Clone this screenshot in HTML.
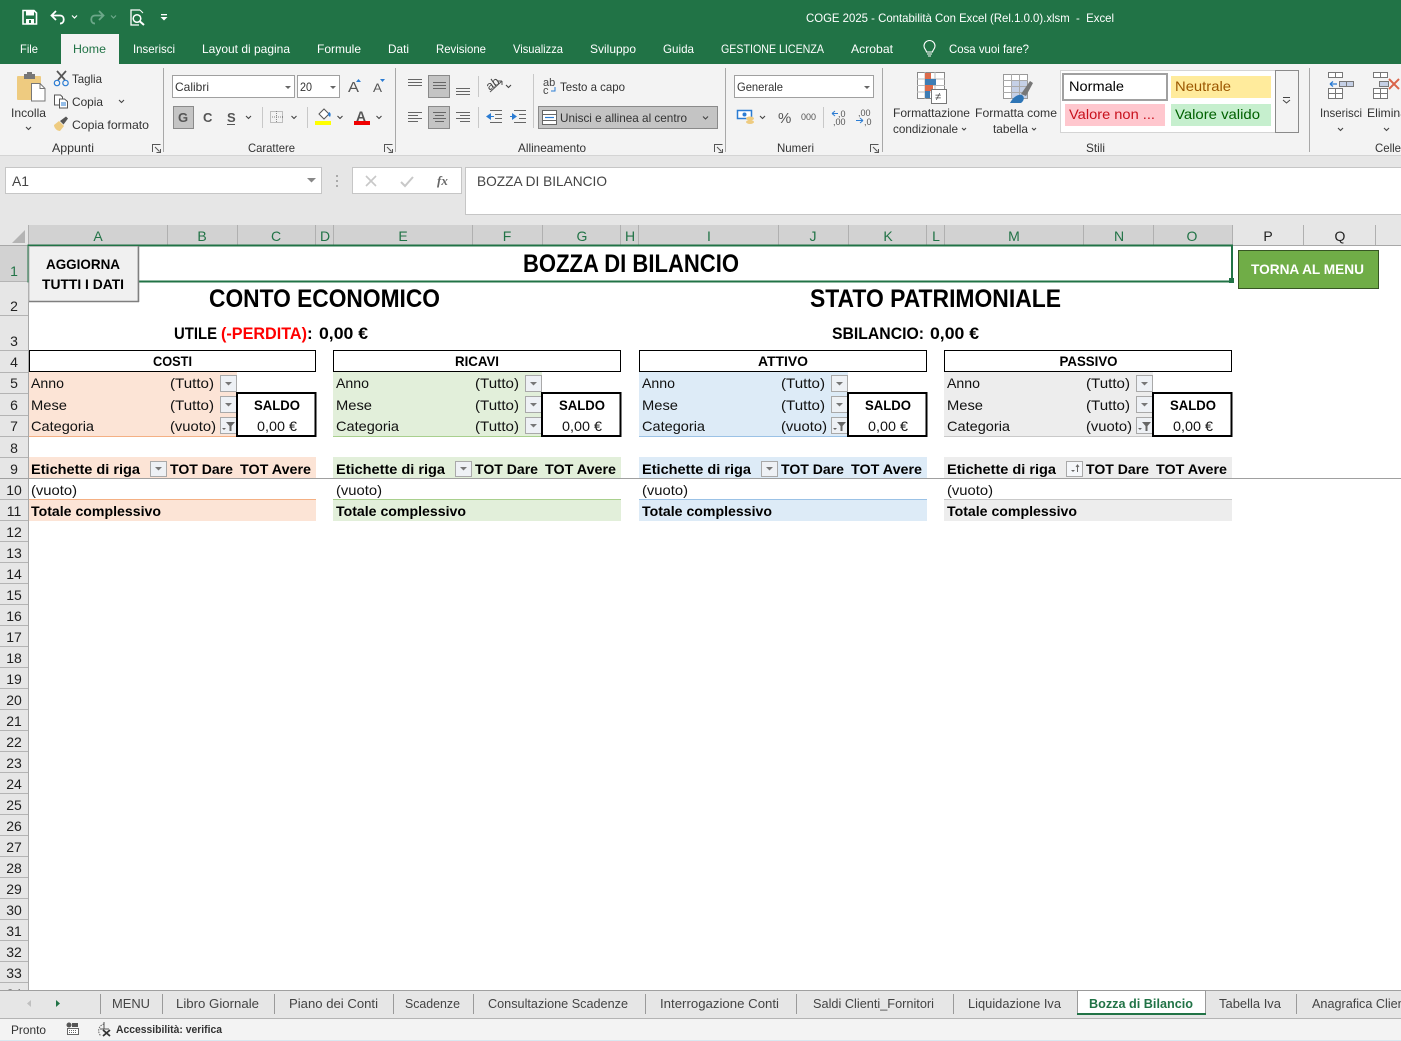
<!DOCTYPE html>
<html lang="it"><head><meta charset="utf-8"><title>COGE 2025 - Excel</title>
<style>
html,body{margin:0;padding:0;width:1401px;height:1041px;overflow:hidden;background:#fff}
svg{display:block;font-family:"Liberation Sans",Arial,sans-serif}
.t{font-size:12px;fill:#fff}
.m{font-size:12px;fill:#fff}
.r{font-size:12px;fill:#333}
.h{font-size:14px;fill:#222;text-anchor:middle}
.hs{font-size:14px;fill:#217346;text-anchor:middle}
.c{font-size:14px;fill:#111}
.b{font-size:14px;fill:#000;font-weight:bold}
.big{font-size:25px;fill:#000;font-weight:bold}
.u{font-size:17px;fill:#000;font-weight:bold}
.tab{font-size:13px;fill:#444}
.ln{stroke:#666;stroke-width:1;fill:none}
.ic{stroke:#555;stroke-width:1;fill:none}
.car{stroke:#444;stroke-width:1.1;fill:none}
</style></head><body>
<svg width="1401" height="1041" viewBox="0 0 1401 1041" xmlns="http://www.w3.org/2000/svg">
<!-- top bar -->
<rect width="1401" height="64" fill="#217346"/>
<path d="M23 10.500h11l2.500 2.500v11h-13.500z" fill="none" stroke="#fff" stroke-width="1.600"/>
<rect x="26" y="11" width="8" height="4.500" fill="#fff"/><rect x="26" y="19" width="8" height="5" fill="#fff"/><rect x="29" y="20" width="2" height="3" fill="#217346"/>
<path d="M56 11l-4.500 4.500 4.500 4.500M52 15.500h8c5 0 5 8 0 8" fill="none" stroke="#fff" stroke-width="1.800"/>
<path d="M72 15.500l2.500 2.500 2.500-2.500" fill="none" stroke="#fff" stroke-width="1.200"/>
<path d="M99 11l4.500 4.500-4.500 4.500M103 15.500h-8c-5 0-5 8 0 8" fill="none" stroke="#6da88a" stroke-width="1.800"/>
<path d="M111 15.500l2.500 2.500 2.500-2.500" fill="none" stroke="#6da88a" stroke-width="1.200"/>
<path d="M140 10h-9v15h8" fill="none" stroke="#fff" stroke-width="1.300"/><path d="M140 10l3 3" fill="none" stroke="#fff"/>
<circle cx="137" cy="18.500" r="3.800" fill="none" stroke="#fff" stroke-width="1.500"/><path d="M140 21.500l4 3.500" stroke="#fff" stroke-width="2"/>
<rect x="161" y="14" width="6" height="1.300" fill="#fff"/><path d="M160.500 17h7l-3.500 3.500z" fill="#fff"/>
<text class="t" x="806" y="22" textLength="308" lengthAdjust="spacingAndGlyphs" xml:space="preserve">COGE 2025 - Contabilità Con Excel (Rel.1.0.0).xlsm  -  Excel</text>
<rect x="61" y="34" width="58" height="30" fill="#f3f3f3"/>
<text class="m" x="20" y="53" textLength="18" lengthAdjust="spacingAndGlyphs">File</text>
<text class="m" x="73" y="53" textLength="33" lengthAdjust="spacingAndGlyphs" style="fill:#217346">Home</text>
<text class="m" x="133" y="53" textLength="42" lengthAdjust="spacingAndGlyphs">Inserisci</text>
<text class="m" x="202" y="53" textLength="88" lengthAdjust="spacingAndGlyphs">Layout di pagina</text>
<text class="m" x="317" y="53" textLength="44" lengthAdjust="spacingAndGlyphs">Formule</text>
<text class="m" x="388" y="53" textLength="21" lengthAdjust="spacingAndGlyphs">Dati</text>
<text class="m" x="436" y="53" textLength="50" lengthAdjust="spacingAndGlyphs">Revisione</text>
<text class="m" x="513" y="53" textLength="50" lengthAdjust="spacingAndGlyphs">Visualizza</text>
<text class="m" x="590" y="53" textLength="46" lengthAdjust="spacingAndGlyphs">Sviluppo</text>
<text class="m" x="663" y="53" textLength="31" lengthAdjust="spacingAndGlyphs">Guida</text>
<text class="m" x="721" y="53" textLength="103" lengthAdjust="spacingAndGlyphs">GESTIONE LICENZA</text>
<text class="m" x="851" y="53" textLength="42" lengthAdjust="spacingAndGlyphs">Acrobat</text>
<path d="M926.500 52c0-2-2.500-3-2.500-6a5.500 5.500 0 0 1 11 0c0 3-2.500 4-2.500 6zM927 54h5M928 56h3" fill="none" stroke="#fff" stroke-width="1.100"/>
<text class="m" x="949" y="53" textLength="80" lengthAdjust="spacingAndGlyphs">Cosa vuoi fare?</text>

<!-- ribbon -->
<rect y="64" width="1401" height="92" fill="#f3f3f3"/>
<rect y="155" width="1401" height="1" fill="#d4d4d4"/>
<rect y="156" width="1401" height="69" fill="#e6e6e6"/>
<g fill="#a8a8a8"><rect x="163" y="68" width="1" height="84"/><rect x="395" y="68" width="1" height="84"/><rect x="725" y="68" width="1" height="84"/><rect x="882" y="68" width="1" height="84"/><rect x="1309" y="68" width="1" height="84"/></g>
<!-- clipboard -->
<rect x="17" y="76" width="24" height="24" rx="1" fill="#eecb80"/>
<rect x="24" y="74" width="11" height="5" fill="#777"/><rect x="27" y="72" width="5" height="3" fill="#777"/>
<path d="M31.500 83.500h8.500l5 5v12.500h-13.500z" fill="#fff" stroke="#777"/><path d="M40 83.500v5h5" fill="none" stroke="#777"/>
<text class="r" x="11" y="117" textLength="35" lengthAdjust="spacingAndGlyphs">Incolla</text>
<path d="M26 127l2.500 2.500 2.500-2.500" class="car"/>
<!-- scissors -->
<path d="M57 71l8 9M66 71l-8 9" stroke="#555" stroke-width="1.700" fill="none"/><circle cx="57" cy="83" r="2.700" fill="none" stroke="#2b7cd3" stroke-width="1.200"/><circle cx="65.500" cy="83" r="2.700" fill="none" stroke="#2b7cd3" stroke-width="1.200"/>
<text class="r" x="72" y="83" textLength="30" lengthAdjust="spacingAndGlyphs">Taglia</text>
<path d="M54.500 95h6l2 2v8h-8z" fill="#fff" stroke="#555"/><path d="M59.500 99h5l3 2.500v6.500h-8z" fill="#fff" stroke="#555"/><path d="M61 103h5M61 105h5" stroke="#2b7cd3"/>
<text class="r" x="72" y="106" textLength="31" lengthAdjust="spacingAndGlyphs">Copia</text>
<path d="M119 100l2.500 2.500 2.500-2.500" class="car"/>
<path d="M54 125l5-4 5 5-4 5c-3 0-6-3-6-6z" fill="#eecb80"/><path d="M60 121l6-4.500 2 2-4.500 6z" fill="#555"/>
<text class="r" x="72" y="129" textLength="77" lengthAdjust="spacingAndGlyphs">Copia formato</text>
<text class="r" x="52" y="152" textLength="42" lengthAdjust="spacingAndGlyphs">Appunti</text>
<path class="ic" d="M152.500 152v-7.500h8M160.500 149v3.500h-4M155 147l4.500 4.500"/>
<path d="M384.500 152v-7.500h8M392.500 149v3.500h-4M387 147l4.500 4.500M714.500 152v-7.500h8M722.500 149v3.500h-4M717 147l4.500 4.500M870.500 152v-7.500h8M878.500 149v3.500h-4M873 147l4.500 4.500" class="ic"/>
<!-- font -->
<rect x="172.500" y="75.500" width="122" height="22" fill="#fff" stroke="#a0a0a0"/>
<text class="r" x="175" y="91" textLength="34" lengthAdjust="spacingAndGlyphs">Calibri</text>
<path d="M285 86h6l-3 3z" fill="#666"/>
<rect x="297.500" y="75.500" width="42" height="22" fill="#fff" stroke="#a0a0a0"/>
<text class="r" x="300" y="91" textLength="12" lengthAdjust="spacingAndGlyphs">20</text>
<path d="M330 86h6l-3 3z" fill="#666"/>
<text x="348" y="92" font-size="15" fill="#555" textLength="11" lengthAdjust="spacingAndGlyphs">A</text><path d="M356 82l2.500-3 2.500 3z" fill="#2b7cd3"/>
<text x="373" y="92" font-size="12" fill="#555" textLength="9" lengthAdjust="spacingAndGlyphs">A</text><path d="M380 79l2.500 3 2.500-3z" fill="#2b7cd3"/>
<rect x="173.500" y="106.500" width="20" height="22" fill="#c4c4c4" stroke="#8a8a8a"/>
<text x="178" y="122" font-size="13" font-weight="bold" fill="#555">G</text>
<text x="203" y="122" font-size="13" font-weight="bold" fill="#555">C</text>
<text x="227" y="122" font-size="13" font-weight="bold" fill="#555">S</text><rect x="227" y="124" width="8" height="1" fill="#555"/>
<path d="M246 116l2.500 2.500 2.500-2.500M291.500 116l2.500 2.500 2.500-2.500M337.500 116l2.500 2.500 2.500-2.500M376.500 116l2.500 2.500 2.500-2.500" class="car"/>
<rect x="262" y="107" width="1" height="21" fill="#c8c8c8"/><rect x="307" y="107" width="1" height="21" fill="#c8c8c8"/>
<rect x="270.500" y="111.500" width="12" height="11" fill="none" stroke="#888" stroke-dasharray="1 1"/><path d="M276.500 111v12M270 117h13" stroke="#888" stroke-dasharray="1 1"/>
<path d="M319 114l5-5 5 5-5 5z" fill="#fff" stroke="#555"/><path d="M329 112c2 1 2 3 1 5l-2-2z" fill="#2b7cd3"/><rect x="315" y="121" width="16" height="4" fill="#ffff00"/>
<text x="356" y="121" font-size="14" font-weight="bold" fill="#555" textLength="10" lengthAdjust="spacingAndGlyphs">A</text><rect x="354" y="121" width="16" height="4" fill="#f00000"/>
<text class="r" x="248" y="152" textLength="47" lengthAdjust="spacingAndGlyphs">Carattere</text>
<!-- alignment -->
<rect x="428.500" y="75.500" width="21" height="22" fill="#c4c4c4" stroke="#8a8a8a"/>
<rect x="428.500" y="106.500" width="21" height="22" fill="#c4c4c4" stroke="#8a8a8a"/>
<path class="ln" d="M408 79.500h14M408 82.500h14M408 85.500h14M433 82.500h13M433 85.500h13M433 88.500h13M456 88.500h14M456 91.500h14M456 94.500h14M408 112.500h14M408 115.500h10M408 118.500h14M408 121.500h10M433 112.500h13M435 115.500h9M433 118.500h13M435 121.500h9M456 112.500h14M460 115.500h10M456 118.500h14M460 121.500h10"/>
<rect x="478" y="76" width="1" height="21" fill="#c8c8c8"/><rect x="478" y="107" width="1" height="21" fill="#c8c8c8"/><rect x="533" y="74" width="1" height="54" fill="#c8c8c8"/>
<text x="486" y="88" font-size="12" fill="#444" transform="rotate(-35 492 84)">ab</text><path d="M490 92l12-11M502 81h-4M502 81v4" class="ic"/>
<path d="M506 85l2.500 2.500 2.500-2.500" class="car"/>
<path d="M486 116.500l5-3.500v7z" fill="#2b7cd3"/><path d="M490 116.500h4" stroke="#2b7cd3"/><path class="ln" d="M490 110.500h12M495 114.500h7M495 118.500h7M490 122.500h12"/>
<path d="M517 116.500l-5-3.500v7z" fill="#2b7cd3"/><path d="M510 116.500h4" stroke="#2b7cd3"/><path class="ln" d="M514 110.500h12M519 114.500h7M519 118.500h7M514 122.500h12"/>
<text x="543" y="86" font-size="11" fill="#444">ab</text><text x="543" y="94" font-size="11" fill="#444">c</text><path d="M555 87v4h-4" fill="none" stroke="#2b7cd3"/>
<text class="r" x="560" y="91" textLength="65" lengthAdjust="spacingAndGlyphs">Testo a capo</text>
<rect x="538.500" y="106.500" width="179" height="22" fill="#c4c4c4" stroke="#8a8a8a"/>
<rect x="542.500" y="110.500" width="14" height="14" fill="#fff" stroke="#666"/><path d="M542 114.500h15M542 120.500h15" stroke="#666"/><path d="M545 117.500h9" stroke="#2b7cd3" stroke-width="1.200"/>
<text class="r" x="560" y="122" textLength="127" lengthAdjust="spacingAndGlyphs">Unisci e allinea al centro</text>
<path d="M703 116.500l2.500 2.500 2.500-2.500" class="car"/>
<text class="r" x="518" y="152" textLength="68" lengthAdjust="spacingAndGlyphs">Allineamento</text>
<!-- numbers -->
<rect x="734.500" y="75.500" width="139" height="22" fill="#fff" stroke="#a0a0a0"/>
<text class="r" x="737" y="91" textLength="46" lengthAdjust="spacingAndGlyphs">Generale</text>
<path d="M864 86h6l-3 3z" fill="#666"/>
<rect x="737.500" y="110.500" width="14" height="8" fill="#fff" stroke="#2b7cd3" stroke-width="1.500"/><circle cx="744.500" cy="114.500" r="2" fill="#2b7cd3"/><ellipse cx="750" cy="122" rx="4" ry="2" fill="#eecb80"/><ellipse cx="750" cy="118.500" rx="4" ry="2" fill="#eecb80"/>
<path d="M760 116l2.500 2.500 2.500-2.500" class="car"/>
<text x="778" y="123" font-size="15" fill="#555">%</text>
<text x="801" y="120" font-size="9" fill="#555" textLength="15" lengthAdjust="spacingAndGlyphs">000</text>
<rect x="823" y="107" width="1" height="21" fill="#c8c8c8"/>
<text x="838" y="117" font-size="9" fill="#555">,0</text><text x="833" y="125" font-size="9" fill="#555">,00</text><path d="M832 113.500h6M832 113.500l3-2.500M832 113.500l3 2.500" fill="none" stroke="#2b7cd3"/>
<text x="858" y="116" font-size="9" fill="#555">,00</text><text x="864" y="125" font-size="9" fill="#555">,0</text><path d="M856 120.500h7M863 120.500l-3-2.500M863 120.500l-3 2.500" fill="none" stroke="#2b7cd3"/>
<text class="r" x="777" y="152" textLength="37" lengthAdjust="spacingAndGlyphs">Numeri</text>
<!-- cond format -->
<rect x="917.500" y="72.500" width="27" height="26" fill="#fff" stroke="#888"/>
<path d="M917 79h28M917 85.500h28M917 92h28M925 72v27M935 72v27" stroke="#bbb"/>
<rect x="925" y="73" width="6" height="6" fill="#dd6b4a"/><rect x="925" y="79" width="11" height="6" fill="#3d7db5"/><rect x="925" y="85" width="8" height="6" fill="#dd6b4a"/><rect x="925" y="91" width="5" height="7" fill="#3d7db5"/>
<rect x="931.500" y="89.500" width="15" height="14" fill="#fff" stroke="#777"/><text x="935" y="100" font-size="11" fill="#444">≠</text>
<text class="r" x="893" y="117" textLength="77" lengthAdjust="spacingAndGlyphs">Formattazione</text>
<text class="r" x="893" y="133" textLength="65" lengthAdjust="spacingAndGlyphs">condizionale</text>
<path d="M962 128l2 2 2-2M1032 128l2 2 2-2" class="car"/>
<!-- table format -->
<rect x="1003.500" y="74.500" width="24" height="24" fill="#fff" stroke="#999"/>
<rect x="1011" y="80" width="16" height="18" fill="#c5d0e6"/>
<path d="M1003 80.500h25M1003 86.500h25M1003 92.500h25M1011.500 74v25M1019.500 74v25" stroke="#aaa"/>
<path d="M1021 94l9-13 3 2-7 13z" fill="#777"/><path d="M1010 103c3-6 8-9 12-8 3 2 2 6-1 8z" fill="#2e75b6"/>
<text class="r" x="975" y="117" textLength="82" lengthAdjust="spacingAndGlyphs">Formatta come</text>
<text class="r" x="993" y="133" textLength="35" lengthAdjust="spacingAndGlyphs">tabella</text>
<!-- styles -->
<rect x="1060.500" y="70.500" width="215" height="62" fill="#fff" stroke="#d4d4d4"/>
<rect x="1275.500" y="70.500" width="23" height="62" fill="#f3f3f3" stroke="#8a8a8a"/>
<path d="M1283 97.500h7M1283 100l3.500 3 3.500-3" stroke="#444" fill="none"/>
<rect x="1063" y="74" width="104" height="26" fill="#fff" stroke="#a0a0a0" stroke-width="2"/>
<text x="1069" y="91" font-size="14" fill="#000" textLength="55" lengthAdjust="spacingAndGlyphs">Normale</text>
<rect x="1171" y="76" width="100" height="22" fill="#ffeb9c"/>
<text x="1175" y="91" font-size="14" fill="#9c5700" textLength="56" lengthAdjust="spacingAndGlyphs">Neutrale</text>
<rect x="1065" y="104" width="100" height="22" fill="#ffc7ce"/>
<text x="1069" y="119" font-size="14" fill="#c8101c" textLength="86" lengthAdjust="spacingAndGlyphs">Valore non ...</text>
<rect x="1171" y="104" width="100" height="22" fill="#c6efce"/>
<text x="1175" y="119" font-size="14" fill="#006100" textLength="85" lengthAdjust="spacingAndGlyphs">Valore valido</text>
<text class="r" x="1086" y="152" textLength="19" lengthAdjust="spacingAndGlyphs">Stili</text>
<!-- cells -->
<g fill="#fff" stroke="#777"><rect x="1328.500" y="72.500" width="7" height="5"/><rect x="1335.500" y="72.500" width="7" height="5"/><rect x="1339.500" y="81.500" width="7" height="5" fill="#c5d0e6"/><rect x="1346.500" y="81.500" width="7" height="5" fill="#c5d0e6"/><rect x="1328.500" y="88.500" width="7" height="5"/><rect x="1335.500" y="88.500" width="7" height="5"/><rect x="1328.500" y="93.500" width="7" height="5"/><rect x="1335.500" y="93.500" width="7" height="5"/></g>
<path d="M1330 84h7M1330 84l3-2.500M1330 84l3 2.500" stroke="#2b7cd3" fill="none" stroke-width="1.300"/>
<g fill="#fff" stroke="#777"><rect x="1373.500" y="72.500" width="7" height="5"/><rect x="1380.500" y="72.500" width="7" height="5"/><rect x="1379.500" y="81.500" width="9" height="5" fill="#c5d0e6"/><rect x="1373.500" y="88.500" width="7" height="5"/><rect x="1380.500" y="88.500" width="7" height="5"/><rect x="1373.500" y="93.500" width="7" height="5"/><rect x="1380.500" y="93.500" width="7" height="5"/></g>
<path d="M1389 79l10 10M1399 79l-10 10" stroke="#d9644a" stroke-width="2"/>
<text class="r" x="1320" y="117" textLength="42" lengthAdjust="spacingAndGlyphs">Inserisci</text>
<text class="r" x="1367" y="117" textLength="40" lengthAdjust="spacingAndGlyphs">Elimina</text>
<path d="M1338 128l2.500 2.500 2.500-2.500M1384 128l2.500 2.500 2.500-2.500" class="car"/>
<text class="r" x="1375" y="152" textLength="26" lengthAdjust="spacingAndGlyphs">Celle</text>

<!-- formula bar -->
<rect x="5.500" y="167.500" width="316" height="26" fill="#fff" stroke="#c6c6c6"/>
<text x="12" y="186" font-size="14" fill="#444" textLength="17" lengthAdjust="spacingAndGlyphs">A1</text>
<path d="M307 178h9l-4.500 4.500z" fill="#888"/>
<g fill="#aaa"><rect x="336" y="175" width="2" height="2"/><rect x="336" y="180" width="2" height="2"/><rect x="336" y="185" width="2" height="2"/></g>
<rect x="352.500" y="167.500" width="109" height="26" fill="#fff" stroke="#c6c6c6"/>
<path d="M366 176l10 10M376 176l-10 10" stroke="#c8c8c8" stroke-width="1.600"/>
<path d="M401 182l4 4 8-9" stroke="#c8c8c8" stroke-width="2" fill="none"/>
<text x="437" y="185" font-size="13" font-style="italic" font-family="Liberation Serif" fill="#666" font-weight="bold">fx</text>
<rect x="465.500" y="167.500" width="940" height="47" fill="#fff" stroke="#c6c6c6"/>
<text x="477" y="186" font-size="14" fill="#444" textLength="130" lengthAdjust="spacingAndGlyphs">BOZZA DI BILANCIO</text>

<!-- column headers -->
<rect x="0" y="225" width="1401" height="20" fill="#e6e6e6"/>
<rect x="29" y="225" width="1203" height="20" fill="#d2d2d2"/>
<path d="M12 243L25 230v13z" fill="#b4b4b4"/>
<path stroke="#b0b0b0" d="M28.500 225v20M167.500 225v20M237.500 225v20M315.500 225v20M333.500 225v20M472.500 225v20M542.500 225v20M620.500 225v20M638.500 225v20M778.500 225v20M848.500 225v20M926.500 225v20M944.500 225v20M1083.500 225v20M1153.500 225v20M1232.500 225v20M1303.500 225v20M1375.500 225v20"/>
<rect x="0" y="245" width="1401" height="1" fill="#a8a8a8"/>
<text class="hs" x="98" y="241">A</text><text class="hs" x="202" y="241">B</text><text class="hs" x="276" y="241">C</text><text class="hs" x="325" y="241">D</text><text class="hs" x="403" y="241">E</text><text class="hs" x="507" y="241">F</text><text class="hs" x="582" y="241">G</text><text class="hs" x="630" y="241">H</text><text class="hs" x="709" y="241">I</text><text class="hs" x="813" y="241">J</text><text class="hs" x="888" y="241">K</text><text class="hs" x="936" y="241">L</text><text class="hs" x="1014" y="241">M</text><text class="hs" x="1119" y="241">N</text><text class="hs" x="1192" y="241">O</text><text class="h" x="1268" y="241">P</text><text class="h" x="1340" y="241">Q</text>

<!-- row headers -->
<rect x="0" y="246" width="28" height="744" fill="#e6e6e6"/>
<rect x="0" y="246" width="28" height="35" fill="#d2d2d2"/>
<rect x="28" y="246" width="1" height="744" fill="#a8a8a8"/>
<path stroke="#b4b4b4" d="M0 281.500h28M0 315.500h28M0 350.500h28M0 372.500h28M0 393.500h28M0 415.500h28M0 436.500h28M0 457.500h28M0 478.500h28M0 499.500h28M0 520.500h28M0 541.500h28M0 562.500h28M0 583.500h28M0 604.500h28M0 625.500h28M0 646.500h28M0 667.500h28M0 688.500h28M0 709.500h28M0 730.500h28M0 751.500h28M0 772.500h28M0 793.500h28M0 814.500h28M0 835.500h28M0 856.500h28M0 877.500h28M0 898.500h28M0 919.500h28M0 940.500h28M0 961.500h28M0 982.500h28"/>
<text class="hs" x="14" y="276">1</text><text class="h" x="14" y="311">2</text><text class="h" x="14" y="346">3</text><text class="h" x="14" y="367">4</text><text class="h" x="14" y="388">5</text><text class="h" x="14" y="410">6</text><text class="h" x="14" y="431">7</text><text class="h" x="14" y="453">8</text><text class="h" x="14" y="474">9</text><text class="h" x="14" y="495">10</text><text class="h" x="14" y="516">11</text><text class="h" x="14" y="537">12</text><text class="h" x="14" y="558">13</text><text class="h" x="14" y="579">14</text><text class="h" x="14" y="600">15</text><text class="h" x="14" y="621">16</text><text class="h" x="14" y="642">17</text><text class="h" x="14" y="663">18</text><text class="h" x="14" y="684">19</text><text class="h" x="14" y="705">20</text><text class="h" x="14" y="726">21</text><text class="h" x="14" y="747">22</text><text class="h" x="14" y="768">23</text><text class="h" x="14" y="789">24</text><text class="h" x="14" y="810">25</text><text class="h" x="14" y="831">26</text><text class="h" x="14" y="852">27</text><text class="h" x="14" y="873">28</text><text class="h" x="14" y="894">29</text><text class="h" x="14" y="915">30</text><text class="h" x="14" y="936">31</text><text class="h" x="14" y="957">32</text><text class="h" x="14" y="978">33</text><text class="h" x="14" y="999">34</text>

<!-- sheet headings -->
<text class="big" x="523" y="272" textLength="216" lengthAdjust="spacingAndGlyphs">BOZZA DI BILANCIO</text>
<text class="big" x="209" y="307" textLength="231" lengthAdjust="spacingAndGlyphs">CONTO ECONOMICO</text>
<text class="big" x="810" y="307" textLength="251" lengthAdjust="spacingAndGlyphs">STATO PATRIMONIALE</text>
<text class="u" x="174" y="339" textLength="43" lengthAdjust="spacingAndGlyphs">UTILE</text>
<text class="u" x="221" y="339" textLength="86" lengthAdjust="spacingAndGlyphs" style="fill:#f00">(-PERDITA)</text>
<text class="u" x="307" y="339">:</text>
<text class="u" x="319" y="339" textLength="49" lengthAdjust="spacingAndGlyphs">0,00 €</text>
<text class="u" x="832" y="339" textLength="92" lengthAdjust="spacingAndGlyphs">SBILANCIO:</text>
<text class="u" x="930" y="339" textLength="49" lengthAdjust="spacingAndGlyphs">0,00 €</text>

<!-- COSTI -->
<g>
<rect x="29.500" y="350.500" width="286" height="21" fill="#fff" stroke="#000"/>
<text class="b" x="153" y="366" textLength="39" lengthAdjust="spacingAndGlyphs">COSTI</text>
<rect x="29" y="372" width="208" height="65" fill="#fce4d6"/><rect x="29" y="436" width="208" height="1" fill="#f4b084"/>
<rect x="29" y="457" width="287" height="21" fill="#fce4d6"/>
<rect x="29" y="499" width="287" height="22" fill="#fce4d6"/><rect x="29" y="499" width="287" height="1" fill="#f4b084"/>
<text class="c" x="31" y="388" textLength="33" lengthAdjust="spacingAndGlyphs">Anno</text><text class="c" x="170" y="388" textLength="44" lengthAdjust="spacingAndGlyphs">(Tutto)</text>
<text class="c" x="31" y="410" textLength="36" lengthAdjust="spacingAndGlyphs">Mese</text><text class="c" x="170" y="410" textLength="44" lengthAdjust="spacingAndGlyphs">(Tutto)</text>
<text class="c" x="31" y="431" textLength="63" lengthAdjust="spacingAndGlyphs">Categoria</text><text class="c" x="170" y="431" textLength="46" lengthAdjust="spacingAndGlyphs">(vuoto)</text>
<rect x="220.500" y="375.500" width="16" height="16" fill="#eef1f5" stroke="#a9a9a9"/><path d="M225 382h7l-3.500 3.500z" fill="#777"/>
<rect x="220.500" y="396.500" width="16" height="16" fill="#eef1f5" stroke="#a9a9a9"/><path d="M225 403h7l-3.500 3.500z" fill="#777"/>
<rect x="220.500" y="417.500" width="16" height="16" fill="#eef1f5" stroke="#a9a9a9"/>
<rect x="237" y="393" width="78.500" height="43" fill="#fff" stroke="#000" stroke-width="2"/>
<path d="M226 422h9l-3.500 4v5h-2v-5z" fill="#666"/><path d="M222 428h4l-2 2z" fill="#666"/>
<text class="b" x="254" y="410" textLength="46" lengthAdjust="spacingAndGlyphs">SALDO</text><text class="c" x="257" y="431" textLength="40" lengthAdjust="spacingAndGlyphs">0,00 €</text>
<text class="b" x="31" y="474" textLength="109" lengthAdjust="spacingAndGlyphs">Etichette di riga</text>
<rect x="150.500" y="461.500" width="16" height="15" fill="#eef1f5" stroke="#a9a9a9"/><path d="M155 467h7l-3.500 3.500z" fill="#777"/>
<text class="b" x="170" y="474" textLength="63" lengthAdjust="spacingAndGlyphs">TOT Dare</text><text class="b" x="240" y="474" textLength="71" lengthAdjust="spacingAndGlyphs">TOT Avere</text>
<text class="c" x="31" y="495" textLength="46" lengthAdjust="spacingAndGlyphs">(vuoto)</text>
<text class="b" x="31" y="516" textLength="130" lengthAdjust="spacingAndGlyphs">Totale complessivo</text>
</g>
<!-- RICAVI -->
<g transform="translate(305 0)">
<rect x="28.500" y="350.500" width="287" height="21" fill="#fff" stroke="#000"/>
<text class="b" x="150" y="366" textLength="44" lengthAdjust="spacingAndGlyphs">RICAVI</text>
<rect x="28" y="372" width="209" height="65" fill="#e2efda"/><rect x="28" y="436" width="209" height="1" fill="#a9d08e"/>
<rect x="28" y="457" width="288" height="21" fill="#e2efda"/>
<rect x="28" y="499" width="288" height="22" fill="#e2efda"/><rect x="28" y="499" width="288" height="1" fill="#a9d08e"/>
<text class="c" x="31" y="388" textLength="33" lengthAdjust="spacingAndGlyphs">Anno</text><text class="c" x="170" y="388" textLength="44" lengthAdjust="spacingAndGlyphs">(Tutto)</text>
<text class="c" x="31" y="410" textLength="36" lengthAdjust="spacingAndGlyphs">Mese</text><text class="c" x="170" y="410" textLength="44" lengthAdjust="spacingAndGlyphs">(Tutto)</text>
<text class="c" x="31" y="431" textLength="63" lengthAdjust="spacingAndGlyphs">Categoria</text><text class="c" x="170" y="431" textLength="44" lengthAdjust="spacingAndGlyphs">(Tutto)</text>
<rect x="220.500" y="375.500" width="16" height="16" fill="#eef1f5" stroke="#a9a9a9"/><path d="M225 382h7l-3.500 3.500z" fill="#777"/>
<rect x="220.500" y="396.500" width="16" height="16" fill="#eef1f5" stroke="#a9a9a9"/><path d="M225 403h7l-3.500 3.500z" fill="#777"/>
<rect x="220.500" y="417.500" width="16" height="16" fill="#eef1f5" stroke="#a9a9a9"/><path d="M225 424h7l-3.500 3.500z" fill="#777"/>
<rect x="237" y="393" width="78.500" height="43" fill="#fff" stroke="#000" stroke-width="2"/>
<text class="b" x="254" y="410" textLength="46" lengthAdjust="spacingAndGlyphs">SALDO</text><text class="c" x="257" y="431" textLength="40" lengthAdjust="spacingAndGlyphs">0,00 €</text>
<text class="b" x="31" y="474" textLength="109" lengthAdjust="spacingAndGlyphs">Etichette di riga</text>
<rect x="150.500" y="461.500" width="16" height="15" fill="#eef1f5" stroke="#a9a9a9"/><path d="M155 467h7l-3.500 3.500z" fill="#777"/>
<text class="b" x="170" y="474" textLength="63" lengthAdjust="spacingAndGlyphs">TOT Dare</text><text class="b" x="240" y="474" textLength="71" lengthAdjust="spacingAndGlyphs">TOT Avere</text>
<text class="c" x="31" y="495" textLength="46" lengthAdjust="spacingAndGlyphs">(vuoto)</text>
<text class="b" x="31" y="516" textLength="130" lengthAdjust="spacingAndGlyphs">Totale complessivo</text>
</g>
<!-- ATTIVO -->
<g transform="translate(611 0)">
<rect x="28.500" y="350.500" width="287" height="21" fill="#fff" stroke="#000"/>
<text class="b" x="147" y="366" textLength="50" lengthAdjust="spacingAndGlyphs">ATTIVO</text>
<rect x="28" y="372" width="209" height="65" fill="#ddebf7"/><rect x="28" y="436" width="209" height="1" fill="#9bc2e6"/>
<rect x="28" y="457" width="288" height="21" fill="#ddebf7"/>
<rect x="28" y="499" width="288" height="22" fill="#ddebf7"/><rect x="28" y="499" width="288" height="1" fill="#9bc2e6"/>
<text class="c" x="31" y="388" textLength="33" lengthAdjust="spacingAndGlyphs">Anno</text><text class="c" x="170" y="388" textLength="44" lengthAdjust="spacingAndGlyphs">(Tutto)</text>
<text class="c" x="31" y="410" textLength="36" lengthAdjust="spacingAndGlyphs">Mese</text><text class="c" x="170" y="410" textLength="44" lengthAdjust="spacingAndGlyphs">(Tutto)</text>
<text class="c" x="31" y="431" textLength="63" lengthAdjust="spacingAndGlyphs">Categoria</text><text class="c" x="170" y="431" textLength="46" lengthAdjust="spacingAndGlyphs">(vuoto)</text>
<rect x="220.500" y="375.500" width="16" height="16" fill="#eef1f5" stroke="#a9a9a9"/><path d="M225 382h7l-3.500 3.500z" fill="#777"/>
<rect x="220.500" y="396.500" width="16" height="16" fill="#eef1f5" stroke="#a9a9a9"/><path d="M225 403h7l-3.500 3.500z" fill="#777"/>
<rect x="220.500" y="417.500" width="16" height="16" fill="#eef1f5" stroke="#a9a9a9"/>
<rect x="237" y="393" width="78.500" height="43" fill="#fff" stroke="#000" stroke-width="2"/>
<path d="M226 422h9l-3.500 4v5h-2v-5z" fill="#666"/><path d="M222 428h4l-2 2z" fill="#666"/>
<text class="b" x="254" y="410" textLength="46" lengthAdjust="spacingAndGlyphs">SALDO</text><text class="c" x="257" y="431" textLength="40" lengthAdjust="spacingAndGlyphs">0,00 €</text>
<text class="b" x="31" y="474" textLength="109" lengthAdjust="spacingAndGlyphs">Etichette di riga</text>
<rect x="150.500" y="461.500" width="16" height="15" fill="#eef1f5" stroke="#a9a9a9"/><path d="M155 467h7l-3.500 3.500z" fill="#777"/>
<text class="b" x="170" y="474" textLength="63" lengthAdjust="spacingAndGlyphs">TOT Dare</text><text class="b" x="240" y="474" textLength="71" lengthAdjust="spacingAndGlyphs">TOT Avere</text>
<text class="c" x="31" y="495" textLength="46" lengthAdjust="spacingAndGlyphs">(vuoto)</text>
<text class="b" x="31" y="516" textLength="130" lengthAdjust="spacingAndGlyphs">Totale complessivo</text>
</g>
<!-- PASSIVO -->
<g transform="translate(916 0)">
<rect x="28.500" y="350.500" width="287" height="21" fill="#fff" stroke="#000"/>
<text class="b" x="143.500" y="366" textLength="58" lengthAdjust="spacingAndGlyphs">PASSIVO</text>
<rect x="28" y="372" width="209" height="65" fill="#ededed"/><rect x="28" y="436" width="209" height="1" fill="#c9c9c9"/>
<rect x="28" y="457" width="288" height="21" fill="#ededed"/>
<rect x="28" y="499" width="288" height="22" fill="#ededed"/><rect x="28" y="499" width="288" height="1" fill="#c9c9c9"/>
<text class="c" x="31" y="388" textLength="33" lengthAdjust="spacingAndGlyphs">Anno</text><text class="c" x="170" y="388" textLength="44" lengthAdjust="spacingAndGlyphs">(Tutto)</text>
<text class="c" x="31" y="410" textLength="36" lengthAdjust="spacingAndGlyphs">Mese</text><text class="c" x="170" y="410" textLength="44" lengthAdjust="spacingAndGlyphs">(Tutto)</text>
<text class="c" x="31" y="431" textLength="63" lengthAdjust="spacingAndGlyphs">Categoria</text><text class="c" x="170" y="431" textLength="46" lengthAdjust="spacingAndGlyphs">(vuoto)</text>
<rect x="220.500" y="375.500" width="16" height="16" fill="#eef1f5" stroke="#a9a9a9"/><path d="M225 382h7l-3.500 3.500z" fill="#777"/>
<rect x="220.500" y="396.500" width="16" height="16" fill="#eef1f5" stroke="#a9a9a9"/><path d="M225 403h7l-3.500 3.500z" fill="#777"/>
<rect x="220.500" y="417.500" width="16" height="16" fill="#eef1f5" stroke="#a9a9a9"/>
<rect x="237" y="393" width="78.500" height="43" fill="#fff" stroke="#000" stroke-width="2"/>
<path d="M226 422h9l-3.500 4v5h-2v-5z" fill="#666"/><path d="M222 428h4l-2 2z" fill="#666"/>
<text class="b" x="254" y="410" textLength="46" lengthAdjust="spacingAndGlyphs">SALDO</text><text class="c" x="257" y="431" textLength="40" lengthAdjust="spacingAndGlyphs">0,00 €</text>
<text class="b" x="31" y="474" textLength="109" lengthAdjust="spacingAndGlyphs">Etichette di riga</text>
<rect x="150.500" y="461.500" width="16" height="15" fill="#f5f7fa" stroke="#a9a9a9"/><path d="M155 470h4l-2 2z" fill="#666"/><path d="M161.500 472v-7M160 467l1.500-2 1.500 2" stroke="#666" fill="none"/>
<text class="b" x="170" y="474" textLength="63" lengthAdjust="spacingAndGlyphs">TOT Dare</text><text class="b" x="240" y="474" textLength="71" lengthAdjust="spacingAndGlyphs">TOT Avere</text>
<text class="c" x="31" y="495" textLength="46" lengthAdjust="spacingAndGlyphs">(vuoto)</text>
<text class="b" x="31" y="516" textLength="130" lengthAdjust="spacingAndGlyphs">Totale complessivo</text>
</g>
<!-- freeze line -->
<rect x="0" y="478" width="1401" height="1" fill="#a0a0a0"/>
<!-- selection -->
<rect x="28.500" y="245.500" width="1203.500" height="36" fill="none" stroke="#217346" stroke-width="2"/>
<rect x="1229" y="278" width="5" height="5" fill="#217346"/>
<!-- buttons -->
<rect x="29" y="246.500" width="109" height="55" fill="#f0f0f0" stroke="#b8b8b8"/>
<path d="M138.500 246v56M29 301.500h110" stroke="#7f7f7f" stroke-width="1.500"/>
<text class="b" x="46" y="269" textLength="74" lengthAdjust="spacingAndGlyphs">AGGIORNA</text>
<text class="b" x="42" y="289" textLength="82" lengthAdjust="spacingAndGlyphs">TUTTI I DATI</text>
<rect x="1238.500" y="250.500" width="140" height="38" fill="#70ad47" stroke="#375623"/>
<text class="b" x="1251" y="274" textLength="113" lengthAdjust="spacingAndGlyphs" style="fill:#fff">TORNA AL MENU</text>

<!-- tab bar -->
<rect x="0" y="990" width="1401" height="29" fill="#e6e6e6"/>
<rect x="0" y="990" width="1401" height="1" fill="#a0a0a0"/>
<rect x="0" y="1018" width="1401" height="1" fill="#b4b4b4"/>
<path d="M31 1000v7l-4-3.500z" fill="#c0c0c0"/><path d="M56 1000v7l4-3.500z" fill="#217346"/>
<path stroke="#9a9a9a" d="M100.500 994v20M162.500 994v20M274.500 994v20M393.500 994v20M473.500 994v20M645.500 994v20M796.500 994v20M953.500 994v20M1296.500 994v20"/>
<path d="M1077.500 1013V990.500H1205.500V1013" fill="#fff" stroke="#9a9a9a"/><rect x="1078" y="991" width="127" height="24" fill="#fff"/>
<rect x="1077" y="1013" width="129" height="2" fill="#217346"/>
<text class="tab" x="112" y="1008" textLength="38" lengthAdjust="spacingAndGlyphs">MENU</text>
<text class="tab" x="176" y="1008" textLength="83" lengthAdjust="spacingAndGlyphs">Libro Giornale</text>
<text class="tab" x="289" y="1008" textLength="89" lengthAdjust="spacingAndGlyphs">Piano dei Conti</text>
<text class="tab" x="405" y="1008" textLength="55" lengthAdjust="spacingAndGlyphs">Scadenze</text>
<text class="tab" x="488" y="1008" textLength="140" lengthAdjust="spacingAndGlyphs">Consultazione Scadenze</text>
<text class="tab" x="660" y="1008" textLength="119" lengthAdjust="spacingAndGlyphs">Interrogazione Conti</text>
<text class="tab" x="813" y="1008" textLength="121" lengthAdjust="spacingAndGlyphs">Saldi Clienti_Fornitori</text>
<text class="tab" x="968" y="1008" textLength="93" lengthAdjust="spacingAndGlyphs">Liquidazione Iva</text>
<text class="tab" x="1089" y="1008" textLength="104" lengthAdjust="spacingAndGlyphs" style="fill:#217346;font-weight:bold">Bozza di Bilancio</text>
<text class="tab" x="1219" y="1008" textLength="62" lengthAdjust="spacingAndGlyphs">Tabella Iva</text>
<text class="tab" x="1312" y="1008" textLength="99" lengthAdjust="spacingAndGlyphs">Anagrafica Clienti</text>

<!-- status -->
<rect x="0" y="1019" width="1401" height="22" fill="#f3f3f3"/>
<rect x="0" y="1040" width="1401" height="1" fill="#d8e8f0"/>
<text class="r" x="11" y="1034" textLength="35" lengthAdjust="spacingAndGlyphs">Pronto</text>
<circle cx="69" cy="1025" r="2.500" fill="#555"/><rect x="72" y="1023" width="6" height="4" fill="#555"/><rect x="67.500" y="1028.500" width="11" height="6" fill="#fff" stroke="#666"/><path d="M69 1030.500h8M69 1032.500h8" stroke="#666" stroke-dasharray="1 1"/>
<path d="M104 1024a7 7 0 0 0-3 12" fill="none" stroke="#666" stroke-dasharray="1.500 1"/><path d="M104 1022v7M100 1029h9" stroke="#555"/><path d="M103 1030l7 6M110 1030l-7 6" stroke="#333" stroke-width="1.800"/>
<text x="116" y="1033" font-size="11" font-weight="bold" fill="#333" textLength="106" lengthAdjust="spacingAndGlyphs">Accessibilità: verifica</text>
</svg>
</body></html>
